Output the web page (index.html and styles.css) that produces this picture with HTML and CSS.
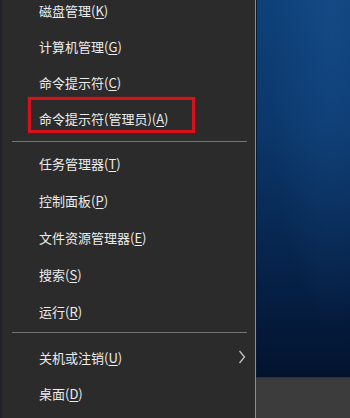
FILE: index.html
```html
<!DOCTYPE html>
<html lang="zh-CN">
<head>
<meta charset="utf-8">
<link rel="stylesheet" href="styles.css">
</head>
<body>
<div class="screen">
  <div class="menu">
    <div class="group group-first">
      <div class="item">磁盘管理(<u>K</u>)</div>
      <div class="item">计算机管理(<u>G</u>)</div>
      <div class="item">命令提示符(<u>C</u>)</div>
      <div class="item item-marked">命令提示符(管理员)(<u>A</u>)<span class="mark"></span></div>
    </div>
    <div class="sep sep-first"></div>
    <div class="group group-second">
      <div class="item">任务管理器(<u>T</u>)</div>
      <div class="item">控制面板(<u>P</u>)</div>
      <div class="item">文件资源管理器(<u>E</u>)</div>
      <div class="item">搜索(<u>S</u>)</div>
      <div class="item">运行(<u>R</u>)</div>
    </div>
    <div class="sep sep-second"></div>
    <div class="group group-third">
      <div class="item item-sub">关机或注销(<u>U</u>)
        <svg class="chevron" width="8" height="14" viewBox="0 0 8 14"><polyline points="1.5,1 6.5,7 1.5,13" fill="none" stroke="#c4c4c4" stroke-width="1.3"/></svg>
      </div>
      <div class="item">桌面(<u>D</u>)</div>
    </div>
  </div>
  <div class="desktop">
    <div class="wallpaper"></div>
    <div class="taskbar"></div>
  </div>
</div>
</body>
</html>
```
FILE: styles.css
```css
html, body {
  margin: 0;
  padding: 0;
  background: #2b2b2b;
}
body {
  width: 350px;
  height: 418px;
  overflow: hidden;
  font-family: "Noto Sans CJK SC", "Noto Sans", sans-serif;
}
.screen {
  display: flex;
  width: 350px;
  height: 418px;
}
.menu {
  width: 253px;
  height: 418px;
  background: #2b2b2b;
  border-left: 2px solid #1f2329;
  border-right: 1px solid #8e8e8e;
  overflow: hidden;
  display: flex;
  flex-direction: column;
}
.group-first {
  margin-top: -8px;
}
.item {
  position: relative;
  height: 36px;
  display: flex;
  align-items: center;
  padding-left: 37px;
  color: #ececec;
  font-size: 13px;
  line-height: 1;
  white-space: nowrap;
}
.group-second .item {
  height: 37px;
}
.item u {
  text-decoration-thickness: 1px;
  text-underline-offset: 2px;
}
.mark {
  position: absolute;
  left: 26px;
  top: -3px;
  width: 161px;
  height: 30px;
  border: 3px solid #d3121b;
  box-shadow: 0 0 2px rgba(200, 20, 20, 0.6);
}
.sep {
  height: 1px;
  background: #747474;
  margin-left: 10px;
  margin-right: 8px;
}
.sep-first {
  margin-top: 5px;
  margin-bottom: 3px;
}
.sep-second {
  margin-top: 2px;
  margin-bottom: 6px;
}
.item-sub .chevron {
  position: absolute;
  left: 236px;
  top: 11px;
}
.desktop {
  flex: 1;
  display: flex;
  flex-direction: column;
}
.wallpaper {
  flex: 1;
  border-left: 1px solid #0a1a33;
  background:
    radial-gradient(ellipse at 80% 10%, rgba(30, 90, 160, 0.35), rgba(30, 90, 160, 0) 60%),
    linear-gradient(180deg, #0e4178 0%, #0b376a 35%, #07264f 65%, #041838 90%, #03132e 100%);
}
.taskbar {
  height: 40px;
  background: #3c3c3c;
  border-top: 1px solid #2e3238;
}
```
